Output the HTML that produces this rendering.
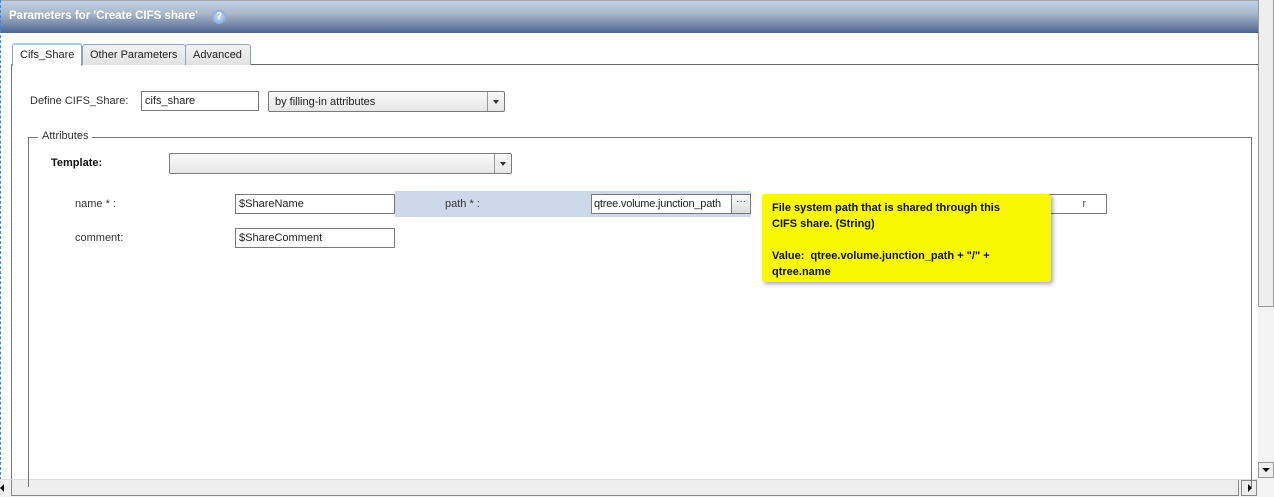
<!DOCTYPE html>
<html><head><style>
*{box-sizing:border-box;margin:0;padding:0}
body{width:1274px;height:497px;overflow:hidden;background:#fff;font-family:"Liberation Sans",sans-serif;font-size:11px;color:#222;position:relative}
.a{position:absolute;white-space:nowrap}
.inp{position:absolute;border:1px solid #7a7a7a;background:#fff;height:20px;padding:3px 3px;font-size:11px;line-height:13px;white-space:nowrap;overflow:hidden}
.sel{position:absolute;border:1px solid #7a7a7a;border-radius:2px;background:linear-gradient(#fafafa,#e6e6e6);height:21px;padding:4px 6px;font-size:11px;white-space:nowrap}
.arr{position:absolute;right:0;top:0;width:17px;height:19px;border-left:1px solid #999;}
.arr:after{content:"";position:absolute;left:5px;top:8px;border:3px solid transparent;border-top:4px solid #333}
.lbl{position:absolute;font-size:11px;color:#333;white-space:nowrap}
.tab{position:absolute;top:44px;height:21px;border:1px solid #8ea3bc;border-bottom:none;border-radius:3px 3px 0 0;background:linear-gradient(#f2f2f2,#e2e2e2);padding:4px 7px;font-size:11px;white-space:nowrap}
</style></head><body>
<div class="a" style="left:0;top:0;width:1258px;height:33px;background:linear-gradient(#c0d0e6,#a9b6c8 40%,#4c6692);border-top:1px solid #aaa"></div>
<div class="a" style="left:9px;top:10px;color:#fff;font-weight:bold;font-size:11.5px">Parameters for 'Create CIFS share'</div>
<div class="a" style="left:212px;top:10px;width:14px;height:14px;border-radius:50%;background:radial-gradient(#cfe2f7,#6f95c8);color:#fff;font-size:10px;font-weight:bold;text-align:center;line-height:14px">?</div>
<div class="a" style="left:0;top:0;width:1px;height:480px;border-left:1px dashed #1e90ff"></div>
<div class="a" style="left:1258px;top:0;width:16px;height:307px;background:#eee;border:1px solid #999;border-top:none"></div>
<div class="a" style="left:1258px;top:307px;width:16px;height:190px;background:#f3f3f3"></div>
<div class="a" style="left:1258px;top:462px;width:16px;height:16px;background:#eee;border:1px solid #999"></div>
<div class="a" style="left:1262px;top:468px;border:4px solid transparent;border-top:4px solid #000"></div>
<div class="a" style="left:0;top:479px;width:1258px;height:18px;background:#f0f0f0;border-top:1px solid #ddd"></div>
<div class="a" style="left:11px;top:480px;width:1228px;height:16px;background:#eee;border-left:1px solid #888;border-right:1px solid #888;border-bottom:1px solid #888"></div>
<div class="a" style="left:1241px;top:480px;width:16px;height:16px;background:#eee;border:1px solid #888"></div>
<div class="a" style="left:1248px;top:484px;border:4px solid transparent;border-left:4px solid #000"></div>
<div class="a" style="left:0;top:484px;border:4px solid transparent;border-right:4px solid #000;border-left:0"></div>
<div class="a" style="left:11px;top:64px;width:1247px;height:1px;background:#666"></div>
<div class="a" style="left:11px;top:64px;width:1px;height:415px;background:#777"></div>
<div class="tab" style="left:82px;width:104px">Other Parameters</div>
<div class="tab" style="left:185px;width:66px">Advanced</div>
<div class="tab" style="left:12px;width:70px;top:43px;height:23px;background:#fff;border-top:2px solid #a8cde8">Cifs_Share</div>
<div class="lbl" style="left:30px;top:95px">Define CIFS_Share:</div>
<div class="inp" style="left:141px;top:91px;width:118px">cifs_share</div>
<div class="sel" style="left:268px;top:91px;width:237px">by filling-in attributes<div class="arr"></div></div>
<div class="a" style="left:28px;top:137px;width:1224px;height:350px;border:1px solid #777;border-bottom:none"></div>
<div class="a" style="left:38px;top:130px;background:#fff;padding:0 4px;font-size:11px;color:#333">Attributes</div>
<div class="lbl" style="left:51px;top:157px;font-weight:bold;color:#111">Template:</div>
<div class="sel" style="left:169px;top:153px;width:343px"><div class="arr"></div></div>
<div class="a" style="left:395px;top:191px;width:356px;height:26px;background:#cdd9ea"></div>
<div class="lbl" style="left:75px;top:198px">name * :</div>
<div class="inp" style="left:235px;top:194px;width:160px">$ShareName</div>
<div class="lbl" style="left:445px;top:198px">path * :</div>
<div class="inp" style="left:591px;top:194px;width:141px;padding-left:2px;letter-spacing:-0.2px">qtree.volume.junction_path</div>
<div class="a" style="left:731px;top:194px;width:20px;height:20px;border:1px solid #777;background:linear-gradient(#fafafa,#ddd);text-align:center;font-size:10px;line-height:14px">···</div>
<div class="lbl" style="left:75px;top:232px">comment:</div>
<div class="inp" style="left:235px;top:228px;width:160px">$ShareComment</div>
<div class="inp" style="left:1015px;top:194px;width:92px;text-align:right;color:#555;padding-right:20px">r</div>
<div class="a" style="left:762px;top:194px;width:289px;height:88px;background:#f8f800;border-radius:3px;box-shadow:2px 2px 4px rgba(0,0,0,.35);padding:6px 10px;font-weight:bold;font-size:11px;line-height:16px;color:#111">File system path that is shared through this<br>CIFS share. (String)<br><br>Value:&nbsp; qtree.volume.junction_path + "/" +<br>qtree.name</div>
</body></html>
